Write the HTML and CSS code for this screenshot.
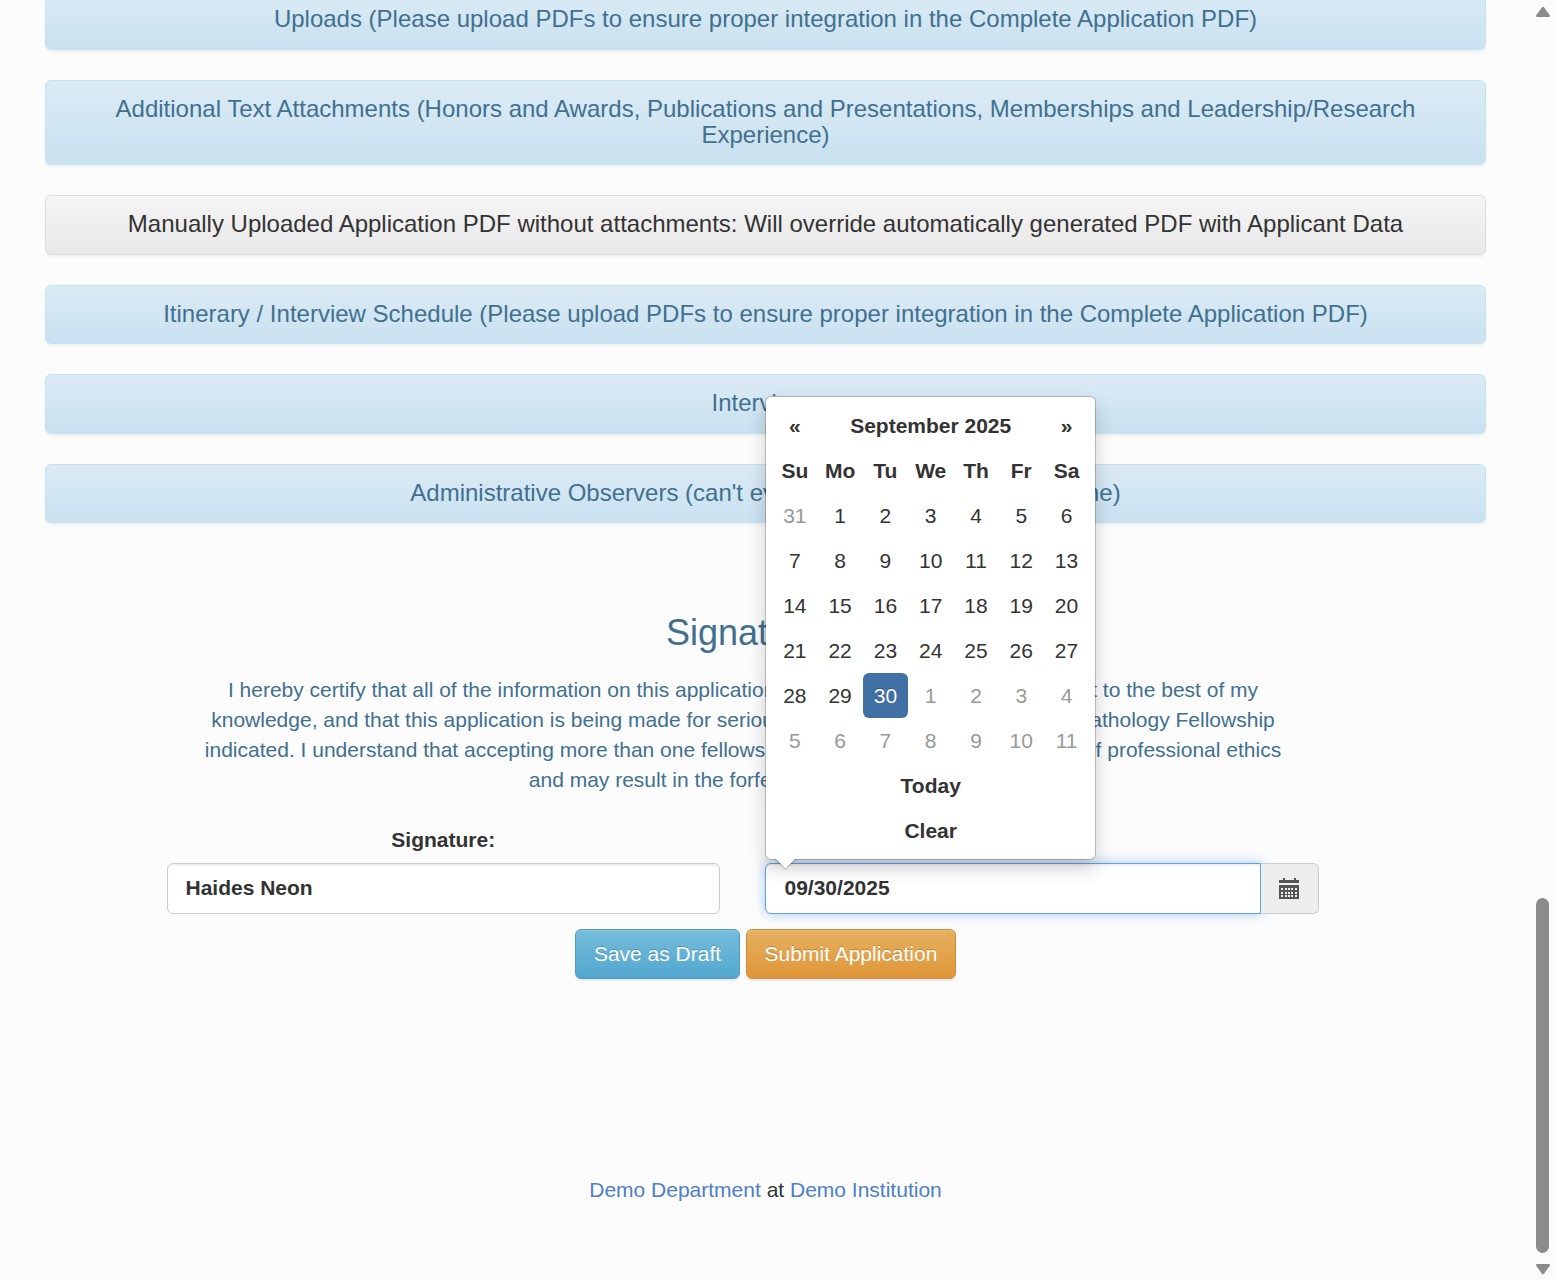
FILE: index.html
```
<!DOCTYPE html>
<html lang="en">
<head>
<meta charset="utf-8">
<title>Fellowship Application</title>
<link rel="stylesheet" href="styles.css">
</head>
<body>
<div class="viewport">
  <main class="page">
    <div class="panels">
      <section class="panel"><h4>Uploads (Please upload PDFs to ensure proper integration in the Complete Application PDF)</h4></section>
      <section class="panel"><h4>Additional Text Attachments (Honors and Awards, Publications and Presentations, Memberships and Leadership/Research<br>Experience)</h4></section>
      <section class="panel panel-default"><h4>Manually Uploaded Application PDF without attachments: Will override automatically generated PDF with Applicant Data</h4></section>
      <section class="panel"><h4>Itinerary / Interview Schedule (Please upload PDFs to ensure proper integration in the Complete Application PDF)</h4></section>
      <section class="panel"><h4>Interviews</h4></section>
      <section class="panel"><h4>Administrative Observers (can't evaluate, <span class="loose">but can</span> view at any time)</h4></section>
    </div>

    <div class="signature">
      <h3>Signature</h3>
      <p class="certify">
        I hereby certify that all of the information on this application <span class="loose">form is true,</span> complete and correct to the best of my<br>
        knowledge, and that this application is being made for serious consideration of training in the Pathology Fellowship<br>
        indicated. I understand that accepting more than one fellowship position constitutes a violation of professional ethics<br>
        and may result in the forfeiture of all positions.
      </p>
      <div class="fields">
        <div class="field">
          <label for="sig">Signature:</label>
          <input id="sig" class="control" type="text" value="Haides Neon">
        </div>
        <div class="field">
          <label for="date">Date:</label>
          <div class="date-group">
            <input id="date" class="control control-focus" type="text" value="09/30/2025">
            <span class="addon">
              <svg width="20" height="21" viewBox="0 0 20 21" fill="#555" shape-rendering="crispEdges"><path d="M0 2h4V0h2v2h9V0h2v2h3v3H0z"/><path fill-rule="evenodd" d="M0 7h20v14H0zM2 10v2h2v-2zM6 10v2h2v-2zM9 10v2h2v-2zM12 10v2h2v-2zM16 10v2h2v-2zM2 14v2h2v-2zM6 14v2h2v-2zM9 14v2h2v-2zM12 14v2h2v-2zM16 14v2h2v-2zM2 17v2h2v-2zM6 17v2h2v-2zM9 17v2h2v-2zM12 17v2h2v-2zM16 17v2h2v-2z"/></svg>
            </span>
            <div class="datepicker">
              <div class="grid">
                <b>«</b><b class="month">September 2025</b><b>»</b>
                <b>Su</b><b>Mo</b><b>Tu</b><b>We</b><b>Th</b><b>Fr</b><b>Sa</b>
                <i class="out">31</i><i>1</i><i>2</i><i>3</i><i>4</i><i>5</i><i>6</i>
                <i>7</i><i>8</i><i>9</i><i>10</i><i>11</i><i>12</i><i>13</i>
                <i>14</i><i>15</i><i>16</i><i>17</i><i>18</i><i>19</i><i>20</i>
                <i>21</i><i>22</i><i>23</i><i>24</i><i>25</i><i>26</i><i>27</i>
                <i>28</i><i>29</i><i class="active">30</i><i class="out">1</i><i class="out">2</i><i class="out">3</i><i class="out">4</i>
                <i class="out">5</i><i class="out">6</i><i class="out">7</i><i class="out">8</i><i class="out">9</i><i class="out">10</i><i class="out">11</i>
                <b class="wide">Today</b>
                <b class="wide">Clear</b>
              </div>
              <svg class="tip" width="22" height="11" viewBox="0 0 22 11"><path d="M0 1L10.5 11L21 1V0H0z" fill="#000" fill-opacity=".2"/><path d="M1 0L10.5 9.5L20 0z" fill="#fff"/></svg>
            </div>
          </div>
        </div>
      </div>
    </div>

    <div class="actions">
      <button class="btn btn-info">Save as Draft</button>
      <button class="btn btn-warning">Submit Application</button>
    </div>

    <footer><a href="#">Demo Department</a> at <a href="#">Demo Institution</a></footer>
  </main>
  <div class="scrollbar">
    <svg width="16" height="12" viewBox="0 0 16 12"><path d="M7 1.3Q8 .2 9 1.3L14.8 9.2Q15.5 11 14 11H2Q.5 11 1.2 9.2z" fill="#8b8b8b"/></svg>
    <div class="thumb"></div>
    <svg width="16" height="12" viewBox="0 0 16 12"><path d="M7 10.7Q8 11.8 9 10.7L14.8 2.8Q15.5 1 14 1H2Q.5 1 1.2 2.8z" fill="#8b8b8b"/></svg>
  </div>
</div>
</body>
</html>
```
FILE: styles.css
```
* { box-sizing: border-box; }
body {
  margin: 0;
  background: #fcfcfc;
  color: #333;
  font: 21px/30px "Liberation Sans", Arial, sans-serif;
  overflow: hidden;
}
.viewport { display: flex; height: 1280px; overflow: hidden; }
.page { width: 1531px; flex: none; text-align: center; }
.panels {
  display: flex;
  flex-direction: column;
  gap: 30px;
  padding: 0 45px;
  margin-top: -9.8px;
}
.panel {
  border: 1px solid #c2e6ef;
  border-radius: 6px;
  background: linear-gradient(#dbebf5, #c9e1f0);
  box-shadow: 0 1.5px 3px rgba(0, 0, 0, .05);
  padding: 15px 20px 16px;
  color: #41708f;
}
.panel-default {
  border-color: #ddd;
  background: linear-gradient(#f5f5f5, #e8e8e8);
  color: #333;
}
h4 { margin: 0; font-size: 24px; line-height: 26.4px; font-weight: 400; white-space: nowrap; }
.loose { word-spacing: 1.5px; }
.signature { width: 1197px; margin: 90.4px 0 0 144.5px; }
h3 { margin: 0 0 22px; font-size: 36px; line-height: 39.6px; font-weight: 400; color: #41708f; }
.certify { margin: 0 0 30px; color: #41708f; white-space: nowrap; }
.fields { display: flex; margin-left: -.5px; margin-right: .5px; }
.field { flex: 1; padding: 0 22.5px; }
label { display: block; font-weight: 700; margin-bottom: 8px; }
.control {
  display: block;
  width: 100%;
  height: 51px;
  padding: 8px 18px 10px;
  border: 1px solid #ccc;
  border-radius: 6px;
  background: #fff;
  color: #333;
  font: inherit;
  font-weight: 700;
  box-shadow: inset 0 1.5px 1.5px rgba(0, 0, 0, .075);
  outline: none;
}
.date-group { position: relative; display: flex; margin: 0 -.5px; }
.control-focus {
  flex: 1;
  padding-left: 19px;
  border-color: #66a0e0;
  border-radius: 6px 0 0 6px;
  box-shadow: inset 0 1.5px 1.5px rgba(0, 0, 0, .075), 0 0 12px rgba(102, 165, 233, .6);
}
.addon {
  display: flex;
  align-items: center;
  justify-content: center;
  width: 58px;
  padding-right: 2px;
  border: 1px solid #ccc;
  border-left: 0;
  border-radius: 0 6px 6px 0;
  background: #eee;
}
.datepicker {
  position: absolute;
  left: 0;
  bottom: 54px;
  width: 331px;
  padding: 6px 5.3px 6px 6.7px;
  border: 1px solid rgba(0, 0, 0, .2);
  border-radius: 6px;
  background: #fff;
  background-clip: padding-box;
  box-shadow: 0 9px 18px rgba(0, 0, 0, .175);
}
.grid { display: grid; grid-template-columns: repeat(7, 1fr); grid-auto-rows: 45px; line-height: 45px; }
.grid i { font-style: normal; border-radius: 6px; }
.grid .month { grid-column: span 5; }
.grid .wide { grid-column: 1 / -1; }
.grid .out { color: #999; }
.grid .active { background: #4170a5; color: #fff; text-shadow: 0 -1px 0 rgba(0, 0, 0, .25); }
.tip { position: absolute; left: 9px; bottom: -11px; }
.actions { display: flex; justify-content: center; gap: 6px; margin-top: 15px; }
.btn {
  height: 50px;
  padding: 0;
  border: 1px solid;
  border-radius: 6px;
  font: inherit;
  color: #fff;
  text-shadow: 0 -1px 0 rgba(0, 0, 0, .2);
  box-shadow: inset 0 1.5px 0 rgba(255, 255, 255, .15), 0 1.5px 1.5px rgba(0, 0, 0, .075);
}
.btn-info { width: 165px; background: linear-gradient(#75bddb, #53a7cf); border-color: #509dbd; }
.btn-warning { width: 210px; background: linear-gradient(#e6b060, #df9638); border-color: #d18c37; }
footer { margin-top: 196px; }
a { color: #4c80c4; text-decoration: none; }
.scrollbar { flex: 1; display: flex; flex-direction: column; align-items: center; justify-content: space-between; padding: 6px 0 5px; }
.thumb { width: 13px; height: 355px; margin: auto 0 10px; border-radius: 7px; background: #8b8b8b; }
```
